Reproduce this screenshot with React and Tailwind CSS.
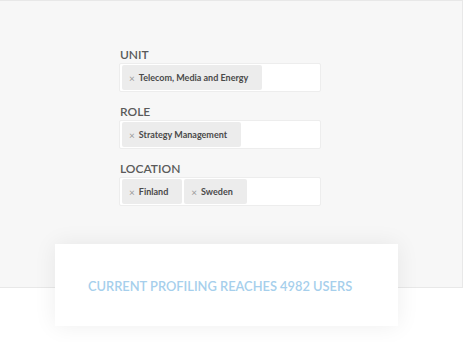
const fields = [
  { label: "UNIT", tags: ["Telecom, Media and Energy"] },
  { label: "ROLE", tags: ["Strategy Management"] },
  { label: "LOCATION", tags: ["Finland", "Sweden"] },
];

function Tag({ text }) {
  return (
    <span className="flex h-[25px] items-center gap-[4px] rounded-[2px] bg-[#ececec] pl-[7px] pr-[14px]">
      <span className="text-[10px] leading-none text-[#9a9a9a]">×</span>
      <span className="text-[9px] font-bold text-[#4a4a4a]">{text}</span>
    </span>
  );
}

export default function App() {
  return (
    <div className="h-[342px] w-[463px] overflow-hidden bg-white font-['Lato',sans-serif]">
      <section className="h-[288px] border-t border-r border-b border-[#e8e8e8] bg-[#f7f7f7] pl-[119px] pt-[46px]">
        <div className="flex w-[202px] flex-col gap-[12px]">
          {fields.map((f) => (
            <div key={f.label}>
              <p className="mb-[1px] pl-[1px] text-[12px] font-semibold leading-[15px] text-[#5a5a5a]">{f.label}</p>
              <div className="flex h-[29px] items-center gap-[2px] rounded-[2px] border border-[#ededed] bg-white px-[2px]">
                {f.tags.map((t) => (
                  <Tag key={t} text={t} />
                ))}
              </div>
            </div>
          ))}
        </div>
      </section>
      <div className="relative z-10 -mt-[44px] ml-[55px] flex h-[82px] w-[343px] items-center bg-white pl-[33px] pt-[4px] shadow-[0_0_22px_rgba(0,0,0,0.07)]">
        <p className="text-[12.85px] font-semibold text-[#a6cfec]">CURRENT PROFILING REACHES 4982 USERS</p>
      </div>
    </div>
  );
}
